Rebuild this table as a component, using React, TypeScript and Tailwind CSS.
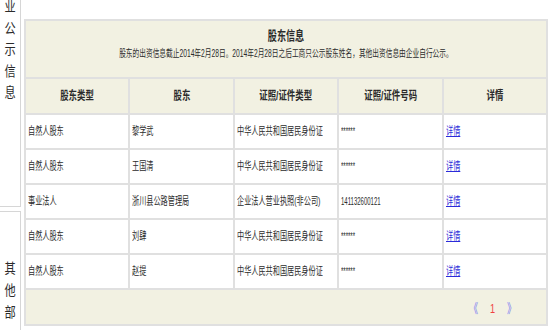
import React from "react";

const rows = [
  { type: "自然人股东", name: "黎学武", cert: "中华人民共和国居民身份证", no: "******" },
  { type: "自然人股东", name: "王国清", cert: "中华人民共和国居民身份证", no: "******" },
  { type: "事业法人", name: "浙川县公路管理局", cert: "企业法人营业执照(非公司)", no: "141132600121" },
  { type: "自然人股东", name: "刘肆", cert: "中华人民共和国居民身份证", no: "******" },
  { type: "自然人股东", name: "赵提", cert: "中华人民共和国居民身份证", no: "******" },
];

const heads = ["股东类型", "股东", "证照/证件类型", "证照/证件号码", "详情"];

export default function App() {
  return (
    <div
      className="w-[550px] h-[330px] overflow-hidden bg-white text-[#2b2b2b] flex"
      style={{ fontFamily: '"Liberation Sans", "Noto Sans CJK SC", sans-serif' }}
    >
      {/* side nav */}
      <div className="w-[21px] shrink-0 flex flex-col">
        <div className="-mt-[4px] h-[211px] border-r border-b border-[#d6d6d6] flex flex-col items-center text-[14px] leading-[21.5px]">
          {"业公示信息".split("").map((c, i) => (
            <span key={i} className="inline-block scale-x-80">{c}</span>
          ))}
        </div>
        <div className="mt-[4px] flex-1 border-r border-t border-[#d6d6d6] pt-[45px] flex flex-col items-center text-[14px] leading-[22px]">
          {"其他部".split("").map((c, i) => (
            <span key={i} className="inline-block scale-x-80">{c}</span>
          ))}
        </div>
      </div>

      <div className="ml-[3px] mt-[19px] w-[524px]">
        <table className="w-full table-fixed border-collapse border-2 border-[#e0e0e0]">
          <thead>
            <tr className="bg-[#f2f1e2]">
              <th colSpan={5} className="h-[58px] pb-[10px] border-2 border-[#e0e0e0] align-middle">
                <div className="text-[13px] font-bold leading-[16px]">
                  <span className="inline-block scale-x-70">股东信息</span>
                </div>
                <div className="text-[10px] font-normal leading-[14px] mt-[3px] whitespace-nowrap">
                  <span className="inline-block scale-x-67">
                    股东的出资信息截止2014年2月28日。2014年2月28日之后工商只公示股东姓名，其他出资信息由企业自行公示。
                  </span>
                </div>
              </th>
            </tr>
            <tr className="bg-[#f2f1e2]">
              {heads.map((h) => (
                <th key={h} className="h-[36px] border-2 border-[#e0e0e0] text-[12px] font-bold text-center">
                  <span className="inline-block scale-x-70 whitespace-nowrap">{h}</span>
                </th>
              ))}
            </tr>
          </thead>
          <tbody>
            {rows.map((r, i) => (
              <tr key={i} className="bg-white">
                {[r.type, r.name, r.cert].map((t, j) => (
                  <td key={j} className="h-[35px] border-2 border-[#e0e0e0] pl-[2px] text-[11px] whitespace-nowrap overflow-visible">
                    <span className="inline-block origin-left scale-x-65">{t}</span>
                  </td>
                ))}
                <td className="h-[35px] border-2 border-[#e0e0e0] pl-[2px] text-[10px] whitespace-nowrap">
                  <span className="inline-block origin-left scale-x-60">{r.no}</span>
                </td>
                <td className="h-[35px] border-2 border-[#e0e0e0] pl-[2px] text-[11px]">
                  <a href="#" className="inline-block origin-left scale-x-65 text-[#2b2bd9] underline">详情</a>
                </td>
              </tr>
            ))}
            <tr className="bg-[#f2f1e2]">
              <td colSpan={5} className="h-[36px] border-2 border-[#e0e0e0]">
                <div className="flex justify-end items-center gap-[9px] pr-[28px] pt-[4px] text-[13px]">
                  <span className="inline-block scale-x-70 text-[#7878f0]">《</span>
                  <span className="inline-block scale-x-70 text-[#f04040]">1</span>
                  <span className="inline-block scale-x-70 text-[#7878f0]">》</span>
                </div>
              </td>
            </tr>
          </tbody>
        </table>
      </div>
    </div>
  );
}
